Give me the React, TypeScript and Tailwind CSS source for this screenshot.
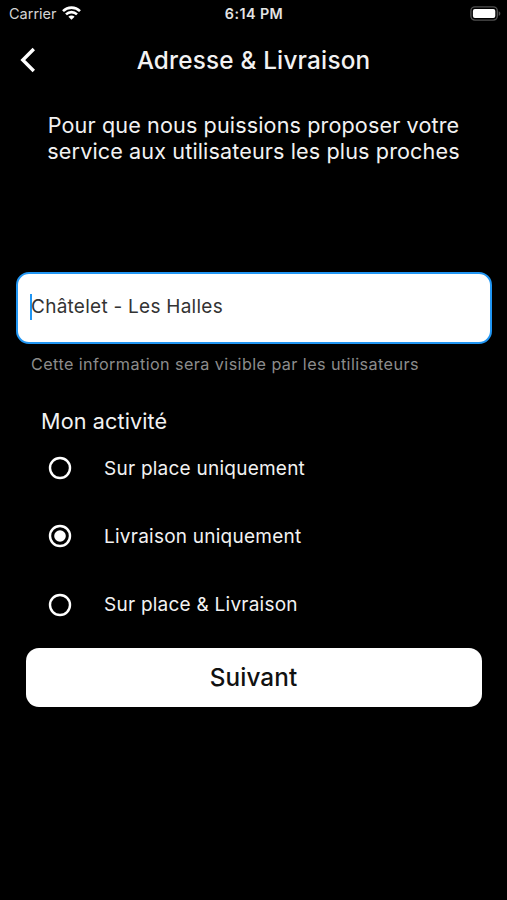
import { useState } from "react";

const options = ["Sur place uniquement", "Livraison uniquement", "Sur place & Livraison"];

function StatusBar() {
  return (
    <div className="grid h-7 grid-cols-3 items-center pl-[9px] pr-[6px]">
      <div className="flex items-center gap-[5px]">
        <span className="text-[14.5px] leading-7 text-[#d4d4d4]">Carrier</span>
        <svg className="-mt-[2px]" width="19" height="14" viewBox="0 0 19 14" fill="none" stroke="#fff" strokeWidth="2.6">
          <path d="M1 5.1a12.2 12.2 0 0 1 17 0" />
          <path d="M4 8.4a7.9 7.9 0 0 1 11 0" />
          <path d="M9.5 13.8 6.4 10.7a4.4 4.4 0 0 1 6.2 0Z" fill="#fff" stroke="none" />
        </svg>
      </div>
      <span className="-ml-[2px] text-center text-[14.3px] font-semibold leading-7 tracking-[0.45px] text-[#e4e4e4]">6:14 PM</span>
      <svg className="-mt-[2px] justify-self-end" width="31" height="15" viewBox="0 0 31 15">
        <rect x="0.9" y="0.9" width="26.4" height="13.2" rx="4" fill="none" stroke="#505050" strokeWidth="1.4" />
        <rect x="2.9" y="2.9" width="22.4" height="9.2" rx="2" fill="#fff" />
        <path d="M28.7 5.2c2.2.8 2.2 3.8 0 4.6Z" fill="#505050" />
      </svg>
    </div>
  );
}

export default function App() {
  const [selected, setSelected] = useState(1);

  return (
    <div className="flex h-[900px] w-[507px] flex-col overflow-hidden bg-black font-['Inter',sans-serif] text-[#f2f2f2]">
      <StatusBar />

      {/* Header */}
      <header className="grid h-[63px] grid-cols-[56px_1fr_56px] items-center">
        <button className="pl-5" aria-label="Retour">
          <svg width="17" height="26" viewBox="0 0 17 26" fill="none" stroke="#fff" strokeWidth="3.4">
            <path d="M13.8 2 2.8 13l11 11" />
          </svg>
        </button>
        <h1 className="pt-px text-center text-[24.3px] font-medium tracking-[0.2px]">Adresse &amp; Livraison</h1>
      </header>

      <p className="mt-[22px] whitespace-nowrap text-center text-[21.6px] leading-[25.8px] tracking-[0.12px]">
        Pour que nous puissions proposer votre
        <br />
        service aux utilisateurs les plus proches
      </p>

      {/* Address field */}
      <div className="ml-4 mr-[15px] mt-[107px]">
        <div className="flex h-[72px] items-center rounded-[13px] border-2 border-[#2196f3] bg-white pl-3">
          <span className="-mt-[2px] h-[26px] w-[2px] bg-[#2196f3]" />
          <span className="-ml-px text-[19px] tracking-[0.26px] text-[#333]">Châtelet - Les Halles</span>
        </div>
        <p className="ml-[15px] mt-2 text-[16.2px] leading-6 tracking-[0.41px] text-[#8c8c8c]">
          Cette information sera visible par les utilisateurs
        </p>
      </div>

      <h2 className="ml-[41px] mt-[29px] text-[21.6px] leading-[32px] tracking-[0.12px]">Mon activité</h2>

      {/* Delivery mode */}
      <div className="-mt-[3px] mb-[9px] ml-12" role="radiogroup">
        {options.map((option, i) => (
          <button
            key={option}
            role="radio"
            aria-checked={selected === i}
            onClick={() => setSelected(i)}
            className="flex h-[68.4px] w-full items-center gap-8 text-left"
          >
            <svg width="24" height="24" viewBox="0 0 24 24">
              <circle cx="12" cy="12" r="10" fill="none" stroke="#fff" strokeWidth="2.4" />
              {selected === i && <circle cx="12" cy="12" r="5.8" fill="#fff" />}
            </svg>
            <span className="pt-[2px] text-[19px] tracking-[0.24px]">{option}</span>
          </button>
        ))}
      </div>

      <button className="ml-[26px] mr-[25px] h-[59px] shrink-0 rounded-[13px] bg-white pr-px text-[24.3px] font-medium tracking-[0.1px] text-[#111]">
        Suivant
      </button>
    </div>
  );
}
